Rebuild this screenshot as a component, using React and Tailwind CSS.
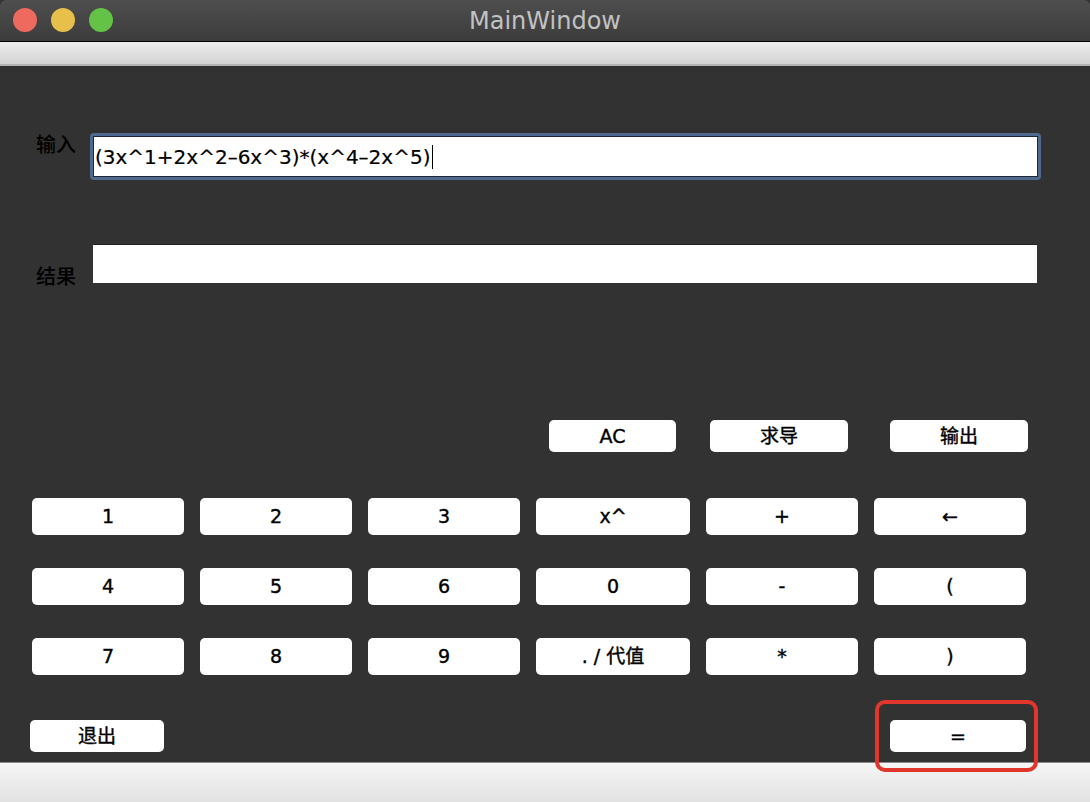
import React from 'react';

const FONT = { fontFamily: '"DejaVu Sans", "Noto Sans CJK SC", sans-serif' };

const keys = ['1', '2', '3', 'x^', '+', '←', '4', '5', '6', '0', '-', '(', '7', '8', '9', '. / 代值', '*', ')'];

const Key = ({ label, className = '' }) => (
  <button className={`bg-white rounded-[5px] text-black text-[19px] [-webkit-text-stroke:0.4px_black] leading-none flex items-center justify-center ${className}`}>
    {label}
  </button>
);

export default function App() {
  return (
    <div className="w-[1090px] h-[802px] flex flex-col bg-[#323232] overflow-hidden" style={FONT}>
      {/* title bar */}
      <div className="h-[41px] shrink-0 relative flex items-center justify-center bg-gradient-to-b from-[#4e4e4e] to-[#3c3c3c] rounded-t-[6px]">
        <div className="absolute left-[13px] top-[8px] flex gap-[14px]">
          <span className="w-[24px] h-[24px] rounded-full bg-[#ee695e]"></span>
          <span className="w-[24px] h-[24px] rounded-full bg-[#e6c04b]"></span>
          <span className="w-[24px] h-[24px] rounded-full bg-[#64c347]"></span>
        </div>
        <span className="text-[24px] text-[#c2c2c2]">MainWindow</span>
      </div>
      <div className="h-px bg-black shrink-0"></div>

      {/* menu bar */}
      <div className="h-[24px] shrink-0 bg-gradient-to-b from-[#ededed] to-[#d3d3d3] border-b-[2px] border-[#b4b4b4]"></div>

      {/* content */}
      <div className="flex-1 flex flex-col">
        <div className="flex items-start mt-[67px]">
          <span className="ml-[36px] w-[54px] mt-[2px] text-[20px] leading-[20px] font-medium text-black">输入</span>
          <div className="w-[951px] h-[47px] rounded-[4px] bg-[#4f6a8e] p-[3px]">
            <div className="h-full bg-white border border-[#1b2736] flex items-center pl-px text-[20px] text-black [-webkit-text-stroke:0.2px_black]">
              <span>(3x^1+2x^2–6x^3)*(x^4–2x^5)</span>
              <span className="w-px h-[24px] bg-black ml-[2px]"></span>
            </div>
          </div>
        </div>

        <div className="flex items-start h-[39px] mt-[64px]">
          <span className="ml-[36px] w-[57px] mt-[23px] text-[20px] leading-[20px] font-medium text-black">结果</span>
          <div className="w-[944px] h-[39px] bg-white border-t border-[#222]"></div>
        </div>

        <div className="flex mt-[137px] ml-[549px]">
          <Key label="AC" className="w-[127px] h-[32px]" />
          <Key label="求导" className="w-[138px] h-[32px] ml-[34px]" />
          <Key label="输出" className="w-[138px] h-[32px] ml-[42px]" />
        </div>

        <div className="grid grid-cols-[152px_152px_152px_154px_152px_152px] gap-x-[16px] gap-y-[33px] auto-rows-[37px] ml-[32px] mt-[46px]">
          {keys.map((k) => (
            <Key key={k} label={k} />
          ))}
        </div>

        <div className="flex mt-[45px]">
          <Key label="退出" className="w-[134px] h-[32px] ml-[30px]" />
          <div className="relative ml-[726px]">
            <Key label="=" className="w-[136px] h-[32px]" />
            <div className="absolute left-[-15px] right-[-12px] top-[-20px] bottom-[-20px] border-[4px] border-[#e0362b] rounded-[10px]"></div>
          </div>
        </div>
      </div>

      {/* status bar */}
      <div className="h-[40px] shrink-0 bg-gradient-to-b from-[#f6f6f6] to-[#e2e2e2] border-t border-[#8c8c8c]"></div>
    </div>
  );
}
